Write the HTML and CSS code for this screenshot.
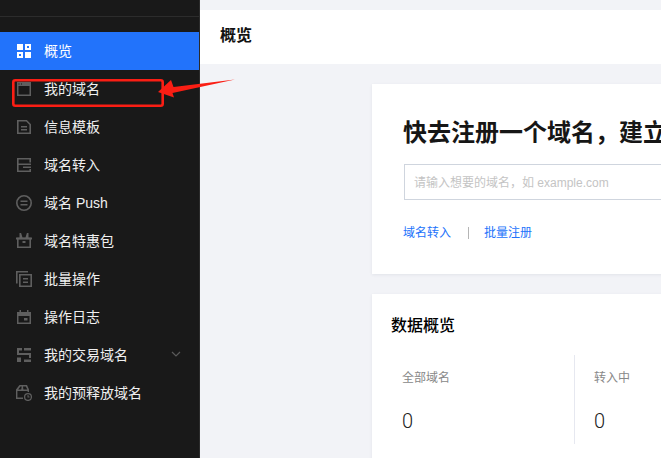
FILE: index.html
```html
<!DOCTYPE html>
<html lang="zh-CN">
<head>
<meta charset="utf-8">
<title>概览</title>
<link rel="stylesheet" href="styles.css">
</head>
<body>
<div class="app">
  <aside class="sidebar">
    <div class="side-top"></div>
    <nav class="menu">
      <a class="item active"><svg class="ico" viewBox="0 0 14 14"><path fill="currentColor" fill-rule="evenodd" d="M0 0h6v6H0zM8 0h6v6H8zM10 2v2h2V2zM0 8h6v6H0zM2 10v2h2v-2zM8 8h6v6H8z"/></svg><span>概览</span></a>
      <a class="item"><svg class="ico" viewBox="0 0 14 14"><path fill="currentColor" fill-rule="evenodd" d="M0 0h14v14H0zM1.500 4v8.500h11V4zM1.500 1.500v1h1v-1zM4 1.500v1h1v-1z"/></svg><span>我的域名</span></a>
      <a class="item"><svg class="ico" viewBox="0 0 14 14"><path fill="none" stroke="currentColor" stroke-width="1.600" d="M.8.8h8.700l3.700 3.700v8.700H.8z"/><path fill="currentColor" d="M4 6h6v1.500H4zM4 9h6v1.500H4z"/></svg><span>信息模板</span></a>
      <a class="item"><svg class="ico" viewBox="0 0 14 14"><path fill="none" stroke="currentColor" stroke-width="1.600" d="M13.200 4.500V.8H.8v12.400h12.400V11"/><path fill="currentColor" d="M1 5.500h13V7H1zM6 8.500h8V10H6z"/></svg><span>域名转入</span></a>
      <a class="item"><svg class="ico ico-lg" viewBox="0 0 16 16"><circle cx="8" cy="8" r="7.200" fill="none" stroke="currentColor" stroke-width="1.600"/><path fill="currentColor" d="M4.500 5.500h7V7h-7zM4.500 9h7v1.500h-7z"/></svg><span>域名 Push</span></a>
      <a class="item"><svg class="ico ico-lg" viewBox="0 0 16 16"><path fill="none" stroke="currentColor" stroke-width="1.600" d="M1.800 5.500h12.400v8.700H1.800z"/><path fill="currentColor" d="M0 4.500h16v2H0zM3.500 0h1.600l1.400 4.500H3.500zM12.500 0h-1.600L9.500 4.500h3zM6.500 8h3v2h-3z"/></svg><span>域名特惠包</span></a>
      <a class="item"><svg class="ico ico-lg" viewBox="0 0 16 16"><path fill="none" stroke="currentColor" stroke-width="1.600" d="M3.800 3.800h11.400v11.400H3.800zM.8 12.500V.8H12"/><path fill="currentColor" d="M7 7h5v1.500H7zM7 10.500h5V12H7z"/></svg><span>批量操作</span></a>
      <a class="item"><svg class="ico" viewBox="0 0 14 14"><path fill="currentColor" fill-rule="evenodd" d="M2.500 0H4v2h6V0h1.500v2H14v12H0V2h2.500zM1.500 6v6.500h11V6zM7 8h3.500v2.500H7z"/></svg><span>操作日志</span></a>
      <a class="item"><svg class="ico" viewBox="0 0 14 14"><path fill="currentColor" d="M0 0h5v2.500H2V5h12v5h-2V7H0zM7 0h7v2.500H7zM0 9.500h4V14H0zM7 11.500h7V14H7z"/></svg><span>我的交易域名</span><svg class="chev" viewBox="0 0 10 6"><path fill="none" stroke="currentColor" stroke-width="1.200" d="M1 1l4 4 4-4"/></svg></a>
      <a class="item"><svg class="ico ico-lg" viewBox="0 0 16 16"><path fill="currentColor" fill-rule="evenodd" d="M3.500 0h7.500L13 4.500V7h-1.400V6H1.400v6.500H7V14H0V4.500zM4.400 1.400 2.200 4.500h3l.5-3.100zM7 1.400l.4 3.100h3.900L9.800 1.400z"/><circle cx="12" cy="12" r="3.400" fill="none" stroke="currentColor" stroke-width="1.300"/><path fill="currentColor" d="M11.500 10h1v2.400h-1zM11.500 11.600h2v1h-2z"/></svg><span>我的预释放域名</span></a>
    </nav>
  </aside>
  <main class="main">
    <header class="page-head">概览</header>
    <div class="content">
      <section class="card hero">
        <h1 class="hero-title">快去注册一个域名，建立</h1>
        <div class="search"><span class="placeholder">请输入想要的域名，如 example.com</span></div>
        <div class="links"><a class="link">域名转入</a><i class="sep"></i><a class="link">批量注册</a></div>
      </section>
      <section class="card data">
        <h2 class="data-title">数据概览</h2>
        <div class="stats">
          <div class="stat"><div class="stat-label">全部域名</div><div class="stat-num">0</div></div>
          <div class="stat"><div class="stat-label">转入中</div><div class="stat-num">0</div></div>
        </div>
      </section>
    </div>
  </main>
</div>
<svg class="annotation" viewBox="0 0 661 458" width="661" height="458">
  <rect x="13.300" y="80.300" width="149.400" height="25.500" rx="2" fill="none" stroke="#fa1e14" stroke-width="2.600"/>
  <path fill="#fa1e14" d="M235 79.500 173.500 87 171 80 158 92 174 97.500 172.500 93z"/>
</svg>
</body>
</html>
```
FILE: styles.css
```css
* { box-sizing: border-box; }
html, body { margin: 0; height: 100%; overflow: hidden; }
body { width: 661px; height: 458px; position: relative; background: #f2f3f7; font-family: "Liberation Sans", "Noto Sans CJK SC", sans-serif; }
.app { display: flex; width: 661px; height: 458px; overflow: hidden; }
.sidebar { flex: none; width: 200px; background: #191919; border-right: 1px solid #2b2b2b; }
.side-top { height: 32px; }
.side-top::before { content: ""; display: block; height: 16px; border-bottom: 1px solid #2c2c2c; }
.menu { display: flex; flex-direction: column; }
.item { display: flex; align-items: center; height: 38px; padding-left: 17px; color: #5f5f5f; position: relative; }
.item span { margin-left: 13px; color: #f0f0f0; font-size: 14px; line-height: 38px; white-space: nowrap; }
.item.active { background: #2273fb; color: #fff; width: 199px; }
.item.active span { color: #fff; }
.ico { flex: none; width: 14px; height: 14px; }
.ico-lg { width: 16px; height: 16px; margin-left: -1px; margin-right: -1px; }
.chev { position: absolute; left: 171px; top: 15px; width: 10px; height: 6px; color: #5a5a5a; }
.main { flex: 1 0 0; min-width: 0; padding-top: 10px; }
.page-head { height: 54px; background: #fff; padding-left: 20px; font-size: 16px; font-weight: 600; line-height: 51px; color: #111; }
.content { padding: 20px 0 0 172px; width: 1100px; }
.card { background: #fff; box-shadow: 0 1px 3px rgba(40, 50, 80, 0.08); }
.hero { width: 800px; height: 190px; padding: 31px 32px 0; }
.hero-title { margin: 0 0 0 -1px; font-size: 24px; font-weight: 700; line-height: 36px; color: #161616; white-space: nowrap; }
.search { margin-top: 13px; width: 520px; height: 36px; border: 1px solid #cfd5de; padding-left: 9px; line-height: 34px; }
.placeholder { font-size: 12px; color: #c4c4c4; }
.links { display: flex; align-items: center; margin: 24px 0 0 -1px; height: 18px; }
.link { font-size: 12px; color: #2273fb; line-height: 18px; }
.sep { display: block; width: 1px; height: 12px; background: #b5b5b5; margin: 0 15px 0 17px; }
.data { width: 800px; height: 200px; margin-top: 20px; padding: 20px 19px 0; }
.data-title { margin: 0; font-size: 16px; font-weight: 500; line-height: 24px; color: #000; }
.stats { display: flex; margin-top: 17px; }
.stat { width: 184px; height: 89px; padding: 14px 11px 0; border-right: 1px solid #e6e8f0; }
.stat:last-child { border-right: 0; padding-left: 19px; }
.stat-label { font-size: 12px; line-height: 18px; color: #888; }
.stat-num { margin-top: 21px; font-family: Roboto, "Liberation Sans", sans-serif; font-size: 20px; font-weight: 300; line-height: 26px; color: #222; }
.annotation { position: absolute; left: 0; top: 0; pointer-events: none; }
```
